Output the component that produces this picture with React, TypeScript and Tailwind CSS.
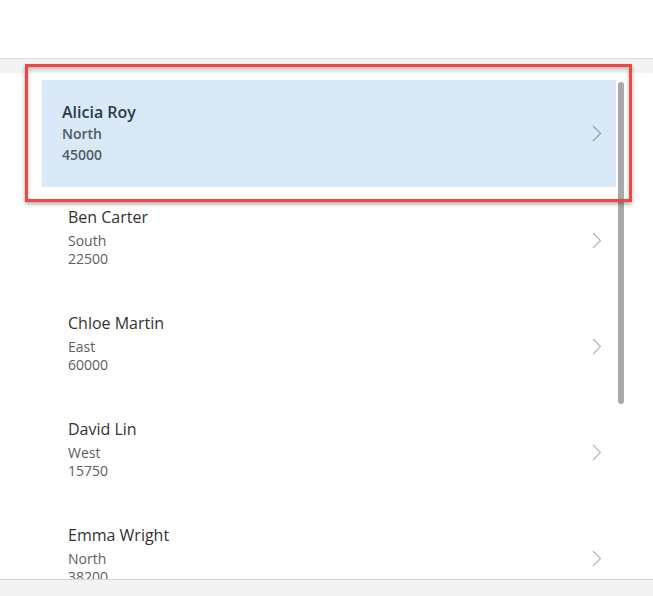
import React from "react";

type Item = { name: string; region: string; amount: string };

const items: Item[] = [
  { name: "Alicia Roy", region: "North", amount: "45000" },
  { name: "Ben Carter", region: "South", amount: "22500" },
  { name: "Chloe Martin", region: "East", amount: "60000" },
  { name: "David Lin", region: "West", amount: "15750" },
  { name: "Emma Wright", region: "North", amount: "38200" },
];

function Chevron({ color }: { color: string }) {
  return (
    <svg width="10" height="17" viewBox="0 0 10 17" fill="none">
      <path d="M1 1 L8.5 8.5 L1 16" stroke={color} strokeWidth="1.1" />
    </svg>
  );
}

export default function App() {
  return (
    <div
      className="relative w-[653px] h-[596px] bg-white overflow-hidden"
      style={{ fontFamily: '"Open Sans", "Noto Sans", sans-serif' }}
    >
      <div className="h-[58px] bg-white" />
      <div className="h-[15px] bg-[#f3f3f3] border-t border-[#dcdcdc]" />
      <div className="relative h-[506px] overflow-hidden bg-white pt-[7px]">
        <div className="mx-[42px] mr-[37px] flex flex-col">
          {items.map((it, i) =>
            i === 0 ? (
              <div
                key={it.name}
                className="h-[107px] bg-[#d9e9f7] flex items-start justify-between pl-[20px] pr-[14px]"
              >
                <div className="pt-[21px] flex flex-col text-[#2d3a46]">
                  <div className="text-[16px] leading-[22px] font-semibold">{it.name}</div>
                  <div className="text-[14px] leading-[21px] font-semibold text-[#4f5b66]">{it.region}</div>
                  <div className="text-[14px] leading-[21px] font-semibold text-[#4f5b66]">{it.amount}</div>
                </div>
                <div className="self-center">
                  <Chevron color="#8b9aa8" />
                </div>
              </div>
            ) : (
              <div
                key={it.name}
                className="h-[106px] flex items-start justify-between pl-[26px] pr-[14px]"
              >
                <div className="pt-[19px] flex flex-col">
                  <div className="text-[16px] leading-[22px] text-[#333333]">{it.name}</div>
                  <div className="mt-[4px] text-[14px] leading-[18px] text-[#5e5e5e]">{it.region}</div>
                  <div className="text-[14px] leading-[18px] text-[#5e5e5e]">{it.amount}</div>
                </div>
                <div className="self-center">
                  <Chevron color="#b3b3b3" />
                </div>
              </div>
            )
          )}
        </div>
        <div className="absolute left-[618px] top-[9px] w-[6px] h-[322px] rounded-full bg-[#a8a8a8]" />
      </div>
      <div className="h-[17px] bg-[#f3f3f3] border-t border-[#d4d4d4]" />
      <div className="absolute left-[25px] top-[64px] w-[607px] h-[138px] border-[3px] border-[#f14646] shadow-[0_2px_4px_rgba(0,0,0,0.35),inset_0_2px_4px_rgba(0,0,0,0.25)]" />
    </div>
  );
}
